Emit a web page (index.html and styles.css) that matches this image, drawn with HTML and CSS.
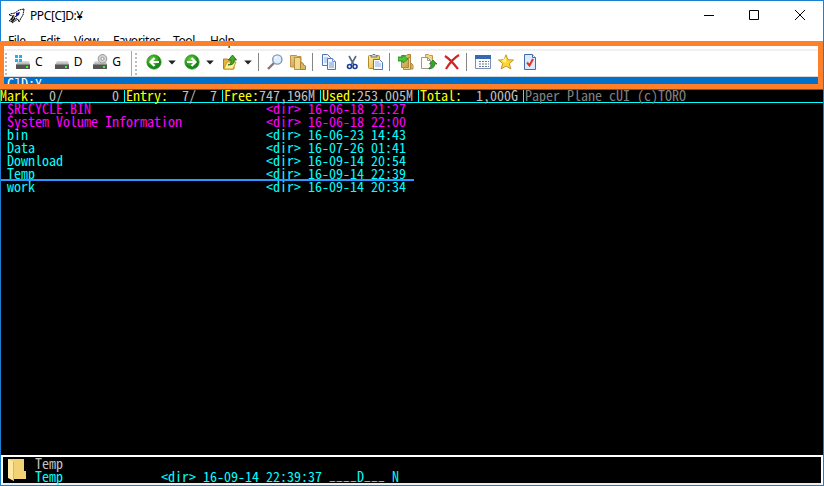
FILE: index.html
```html
<!DOCTYPE html>
<html lang="en">
<head>
<meta charset="utf-8">
<title>PPC[C]D:¥</title>
<link rel="stylesheet" href="styles.css">
</head>
<body>
<svg class="defs" width="0" height="0">
  <defs>
    <linearGradient id="metal" x2="0" y2="1"><stop offset="0" stop-color="#e0e0e0"/><stop offset="1" stop-color="#a5a5a5"/></linearGradient>
    <radialGradient id="green" cx=".4" cy=".35"><stop offset="0" stop-color="#6ed04c"/><stop offset=".65" stop-color="#36a822"/><stop offset="1" stop-color="#168319"/></radialGradient>
    <linearGradient id="gold" x2="1" y2="1"><stop offset="0" stop-color="#fff0a0"/><stop offset="1" stop-color="#dfac38"/></linearGradient>
    <linearGradient id="tan" x2="1" y2="1"><stop offset="0" stop-color="#ead08a"/><stop offset="1" stop-color="#bd9440"/></linearGradient>
    <symbol id="disk" viewBox="0 0 16 16"><path d="M3 7h11l1 4H1z" fill="url(#metal)"/><path d="M1 10h14v5H1z" fill="#555"/><path d="M1 10h14v1H1z" fill="#888"/><path d="M11 12h2v2h-2z" fill="#36ff28"/></symbol>
    <symbol id="caret" viewBox="0 0 8 5"><path d="M.2.500h7.600L4 4.500z" fill="#222"/></symbol>
  </defs>
</svg>
<div class="window">
  <header class="titlebar">
    <svg class="logo" width="18" height="16" viewBox="0 0 18 16"><path d="M16 1l-5 1-4 3-5 1-1 1 4 1-2 3-2 2h3l1-2 1 1-2 3 6-4 1 3 2-4 2-3z" fill="#fff" stroke="#111" stroke-dasharray="2 .5"/><path d="M8 5l4-1-1 3-3 2z" fill="#1515a8"/><path d="M6 7l-3 5 5-4M7 10l-4 4 6-4" stroke="#111" fill="none"/></svg>
    <span class="title">PPC[C]D:¥</span>
    <svg class="controls" width="120" height="12" viewBox="0 0 120 12" fill="none" stroke="#000"><path d="M1 6.500h10M46.500 1.500h9v9h-9zM92 1l10 10M102 1L92 11"/></svg>
  </header>
  <nav class="menu"><span class="m-file">File</span><span class="m-edit">Edit</span><span class="m-view">View</span><span class="m-fav">Favorites</span><span class="m-tool">Tool</span><span>Help</span></nav>
  <div class="toolbar">
    <i class="grip"></i>
    <div class="drives">
      <span class="drive"><svg width="16" height="16" viewBox="0 0 16 16"><use href="#disk"/><path d="M0 1h3v3H0zM4 1h3v3H4zM0 5h3v3H0zM4 5h3v3H4z" fill="#18b8e6"/></svg>C</span>
      <span class="drive"><svg width="16" height="16"><use href="#disk"/></svg>D</span>
      <span class="drive"><svg width="16" height="16" viewBox="0 0 16 16"><use href="#disk"/><circle cx="10.500" cy="4.800" r="4.300" fill="#d2d2d2" stroke="#999"/><circle cx="10.500" cy="4.800" r="1.500" fill="#fff" stroke="#999"/></svg>G</span>
    </div>
    <i class="grip second"></i>
    <div class="tools">
      <span class="drop"><svg width="16" height="16" viewBox="0 0 16 16"><circle cx="8" cy="8" r="7.200" fill="url(#green)" stroke="#37942a" stroke-width=".7"/><path d="M8.500 4L4.500 8l4 4M5 8h8" fill="none" stroke="#fff" stroke-width="2.200"/></svg><svg class="caret" width="8" height="5"><use href="#caret"/></svg></span>
      <span class="drop"><svg width="16" height="16" viewBox="0 0 16 16"><circle cx="8" cy="8" r="7.200" fill="url(#green)" stroke="#37942a" stroke-width=".7"/><path d="M7.500 4l4 4-4 4M11 8H3" fill="none" stroke="#fff" stroke-width="2.200"/></svg><svg class="caret" width="8" height="5"><use href="#caret"/></svg></span>
      <span class="drop"><svg width="16" height="16" viewBox="0 0 16 16"><path d="M1.500 15V5h4l1 1H12v9z" fill="#e5b43e" stroke="#b47c20"/><path d="M2 15l3-7h9l-3 7z" fill="#fff0a0" stroke="#cf9a2c"/><path d="M6 11q4-1 3-5H6.500L10.500 1l4 5H12q1 5-6 5z" fill="#42ae26" stroke="#187016" stroke-width=".9"/></svg><svg class="caret" width="8" height="5"><use href="#caret"/></svg></span>
      <i class="sep"></i>
      <span class="tool"><svg width="16" height="16" viewBox="0 0 16 16"><path d="M1 15l6-6" stroke="#8b7474" stroke-width="2.400"/><circle cx="10.300" cy="5.500" r="4.600" fill="#dceeff" stroke="#8599ad" stroke-width="1.400"/><path d="M8 5q0-2 2-2" stroke="#fff" fill="none"/></svg></span>
      <span class="tool"><svg width="16" height="16" viewBox="0 0 16 16"><path d="M.5 1.500h6l1 1H11V13H.5z" fill="url(#tan)" stroke="#bd9345"/><path d="M4.500 3.500h6v12h-6z" fill="#f0d78e" stroke="#b98f40"/><path d="M10.500 15.500V10l1-2 2 2v1l2 1v3.500z" fill="#d9b566" stroke="#ae7e33"/></svg></span>
      <i class="sep"></i>
      <span class="tool"><svg width="16" height="16" viewBox="0 0 16 16" fill="#edf5ff" stroke="#5276b4"><path d="M1.500.5h5l3 3v8h-8z"/><path d="M3 4h4M3 6h4M3 8h4" stroke="#9ab5e0"/><path d="M6.500 4.500h5l3 3v8h-8z"/><path d="M11.500 4.500v3h3M8 9h5M8 11h5M8 13h5" stroke="#7598d2"/></svg></span>
      <span class="tool"><svg width="16" height="16" viewBox="0 0 16 16" fill="none"><path d="M5 2l5 9M12 2l-5 9" stroke="#526b82" stroke-width="1.600"/><circle cx="5.500" cy="12.500" r="2" stroke="#173d98" stroke-width="1.600"/><circle cx="11" cy="12.500" r="2" stroke="#173d98" stroke-width="1.600"/></svg></span>
      <span class="tool"><svg width="16" height="16" viewBox="0 0 16 16"><rect x="1.500" y="1.500" width="11" height="13" rx="1" fill="url(#gold)" stroke="#b18a2d"/><path d="M4 3V1.500h1L6 .5h2l1 1h1V3z" fill="#d8d8ce" stroke="#777"/><path d="M6.500 5.500h6l3 3v7h-9z" fill="#f4f8ff" stroke="#5276b4"/><path d="M8 8h4M8 10h6M8 12h6" stroke="#8caee0"/></svg></span>
      <i class="sep"></i>
      <span class="tool"><svg width="16" height="16" viewBox="0 0 16 16"><path d="M3.500 1.500h5l1-1h3v13h-9z" fill="url(#tan)" stroke="#ad8135"/><path d="M10.500 3.500h2v12h-7v-2h5zM13 15V9l2 2v4z" fill="#ead08a" stroke="#b28a3d"/><path d="M0 3h5V1l5 4-5 4V7H0z" fill="#45c934" stroke="#188620" stroke-width=".8"/></svg></span>
      <span class="tool"><svg width="16" height="16" viewBox="0 0 16 16"><path d="M4.500 2.500v-2h3l1 1h3v10h-7z" fill="#efd586" stroke="#c09a4a"/><path d="M.5 3.500h6l3 3v8h-9z" fill="#fffdf4" stroke="#999"/><path d="M6.500 3.500v3h3" fill="none" stroke="#999"/><path d="M8 14q3-1 3-4H8.500L12 6l4 4h-2.300q0 4.500-5.700 5z" fill="#36aa25" stroke="#187016" stroke-width=".7"/></svg></span>
      <span class="tool"><svg width="16" height="16" viewBox="0 0 16 16"><path d="M1 2q5 3 13 13M15 1Q8 5 2 15" fill="none" stroke="#ce2525" stroke-width="2.200"/></svg></span>
      <i class="sep"></i>
      <span class="tool"><svg width="16" height="16" viewBox="0 0 16 16"><path d="M.5 1.500h15v13H.5z" fill="#f9fbff" stroke="#7790b9"/><path d="M0 1h16v4H0z" fill="#3769b2"/><path d="M4 7.500h10M4 10h10M4 12.500h10" stroke="#6d7785" stroke-dasharray="2 1"/></svg></span>
      <span class="tool"><svg width="16" height="16" viewBox="0 0 16 16"><path d="M8 .8l2 5 5.500.2-4.200 3.500 1.500 5.500L8 12l-4.800 3 1.500-5.500L.5 6 6 5.800z" fill="#ffd735" stroke="#be8922" stroke-width=".9"/><path d="M8 3v6L4 7" fill="#fff49b"/></svg></span>
      <span class="tool last"><svg width="16" height="16" viewBox="0 0 16 16"><path d="M2.500.5h8l3 3v12h-11z" fill="#dceaff" stroke="#456dab"/><path d="M10.500.5v3h3" fill="#fff" stroke="#456dab"/><path d="M5 8.500l2.500 3L11 5" fill="none" stroke="#e33222" stroke-width="2"/></svg></span>
    </div>
  </div>
  <div class="path mono">C]D:¥</div>
  <main class="pane mono">
    <div class="status">
      <div class="cell"><b>Mark:</b>  0/       0</div><div class="cell"><b>Entry:</b>  7/  7</div><div class="cell"><b>Free:</b>747,196M</div><div class="cell"><b>Used:</b>253,005M</div><div class="cell"><b>Total:</b>  1,000G</div><div class="about">Paper Plane cUI (c)TORO</div>
    </div>
    <div class="files">
      <div class="row system"><span>$RECYCLE.BIN</span><span>&lt;dir&gt;</span><span>16-06-18 21:27</span></div>
      <div class="row system"><span>System Volume Information</span><span>&lt;dir&gt;</span><span>16-06-18 22:00</span></div>
      <div class="row"><span>bin</span><span>&lt;dir&gt;</span><span>16-06-23 14:43</span></div>
      <div class="row"><span>Data</span><span>&lt;dir&gt;</span><span>16-07-26 01:41</span></div>
      <div class="row"><span>Download</span><span>&lt;dir&gt;</span><span>16-09-14 20:54</span></div>
      <div class="row current"><span>Temp</span><span>&lt;dir&gt;</span><span>16-09-14 22:39</span></div>
      <div class="row"><span>work</span><span>&lt;dir&gt;</span><span>16-09-14 20:34</span></div>
    </div>
  </main>
  <footer class="info mono">
    <svg width="20" height="24" viewBox="0 0 20 24"><path d="M1 1h16v12h2v8H6L1 19z" fill="#f3d276"/><path d="M1 1l6 3v19l-6-3z" fill="#ffe9a2"/><path d="M6 4h1v19H6z" fill="#dcb658"/></svg>
    <div class="detail"><div class="entry">Temp</div><div class="attrs">Temp              &lt;dir&gt; 16-09-14 22:39:37 <span class="blank">____</span>D<span class="blank">___</span> N</div></div>
  </footer>
  <div class="highlight"></div>
</div>
</body>
</html>
```
FILE: styles.css
```css
* { box-sizing: border-box; }
body { margin: 0; overflow: hidden; background: #fff; }
.defs { position: absolute; }
.window {
  position: relative;
  width: 824px;
  height: 486px;
  border: 1px solid #1b7fd2;
  display: flex;
  flex-direction: column;
  background: #fff;
  font: 12px/16px "Noto Sans", "Open Sans", sans-serif;
  color: #000;
}
svg { display: block; flex: none; }
.titlebar { height: 31px; flex: none; display: flex; align-items: flex-start; padding: 7px 0 0 7px; }
.title { margin-left: 4px; letter-spacing: -.4px; }
.controls { margin: 1px 0 0 auto; }
.menu { height: 17px; flex: none; display: flex; padding: 1px 0 0 7px; letter-spacing: -.4px; white-space: nowrap; }
.menu span { flex: none; }
.m-file { width: 32px; }
.m-edit { width: 34px; }
.m-view { width: 39px; }
.m-fav { width: 60px; }
.m-tool { width: 37px; }
.toolbar { height: 28px; flex: none; display: flex; border-top: 2px solid #f0f0f0; border-bottom: 1px solid #d9d9d9; padding-left: 4px; }
.grip { width: 2px; margin-top: 2px; background: repeating-linear-gradient(#bdbdbd 0 2px, transparent 2px 4px); }
.drives { width: 125px; display: flex; padding: 3px 0 0 8px; border-right: 1px solid #aaa; }
.drive { width: 39px; height: 16px; display: flex; gap: 4px; }
.grip.second { margin-left: 3px; }
.tools { display: flex; padding: 3px 0 0 7px; margin-left: -1px; }
.drop { width: 38px; display: flex; padding-left: 3px; }
.caret { margin: 6px 0 0 6px; }
.tool { width: 23px; padding-left: 2px; }
.last { padding-left: 3px; }
.sep { width: 8px; }
.sep::before { content: ""; display: block; width: 1px; height: 18px; margin: -1px 0 0 1px; background: #858585; }
.mono { font: 14px/13px "Noto Sans Mono CJK JP", "Noto Sans CJK JP", monospace; font-feature-settings: "hwid"; font-weight: 300; }
.path { height: 12px; flex: none; background: #0070cb; color: #fff; padding-left: 6px; overflow: hidden; }
.pane { flex: 1; background: #000; border-top: 1px solid #1769b0; color: #0ff; min-height: 0; }
.status { height: 13px; display: flex; border-bottom: 1px solid #0ff; color: #c0c0c0; margin-left: -1px; line-height: 10px; white-space: pre; }
.status > * { flex: none; }
.status b { color: #ff0; font-weight: inherit; }
.cell { padding-right: 5px; margin-right: 1px; border-right: 1px solid #0ff; }
.about { color: #808080; }
.row { height: 13px; line-height: 11px; display: grid; grid-template-columns: 259px 42px 106px; width: 413px; padding-left: 6px; }
.system { color: #f0f; }
.current { position: relative; }
.current::after { content: ""; position: absolute; left: 0; right: 0; top: 11px; height: 2px; background: #3296ff; }
.info { height: 30px; flex: none; border: 2px solid #fff; border-bottom-color: #eee; display: flex; background: #000; color: #0ff; padding-left: 4px; }
.info svg { margin-top: 1px; }
.detail { padding: 0 0 0 8px; }
.attrs { white-space: pre; }
.blank { position: relative; top: -2px; }
.entry { color: #c0c0c0; }
.highlight { position: absolute; left: -1px; top: 40px; width: 823px; height: 48px; border: 5px solid #ff8028; border-left-width: 4px; }
```
